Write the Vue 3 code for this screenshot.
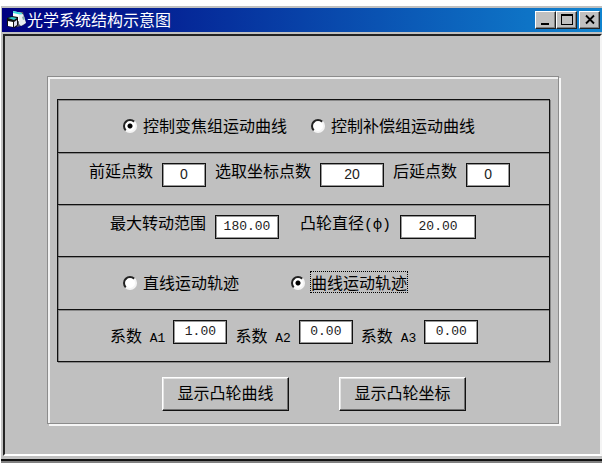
<script setup>
import { ref } from 'vue'

const curve = ref('zoom')
const track = ref('curve')
const points = ref([
  { id: 'front', label: '前延点数', value: '0', size: 'small' },
  { id: 'picked', label: '选取坐标点数', value: '20', size: 'medium' },
  { id: 'back', label: '后延点数', value: '0', size: 'small' },
])
const range = ref('180.00')
const diameter = ref('20.00')
const factors = ref([
  { id: 'A1', value: '1.00' },
  { id: 'A2', value: '0.00' },
  { id: 'A3', value: '0.00' },
])
</script>

<template>
  <main class="window">
    <header class="titlebar">
      <svg class="logo" viewBox="0 0 20 18" aria-hidden="true">
        <path d="M6 1l10 0 1 4 2 6-2 3-7 2z" fill="#556" />
        <path d="M6 0l9 2 0 9-9-2z" fill="#fff" />
        <path d="M6 0l9 2v2L6 2z" fill="#3fdede" />
        <path d="M12 4l4-1 3 9-5 3-2-2z" fill="#e8eef0" />
        <path d="M15 6l2-1 1 3-2 1z" fill="#8aa" />
        <path d="M0 7l5-2 6 1 0 8-3 3-8-2z" fill="#111" />
        <path d="M1 7l4-1 5 1-3 2z" fill="#2cc8c8" />
        <path d="M1 10l5 1v5l-5-1z" fill="#fff" />
        <path d="M7 11l3-2v5l-3 2z" fill="#dde" />
      </svg>
      <h1>光学系统结构示意图</h1>
      <div class="controls">
        <button type="button" aria-label="最小化">
          <svg viewBox="0 0 16 14"><path d="M3 10h8v2H3z" /></svg>
        </button>
        <button type="button" aria-label="最大化">
          <svg viewBox="0 0 16 14"><path d="M2 1h12v11H2zM3 3v8h10V3z" fill-rule="evenodd" /></svg>
        </button>
        <button type="button" aria-label="关闭" class="close">
          <svg viewBox="0 0 16 14"><path d="M4 2.500l8 8M12 2.500l-8 8" fill="none" stroke="#000" stroke-width="1.800" /></svg>
        </button>
      </div>
    </header>

    <form class="client" @submit.prevent>
      <div class="frame">
        <div class="grid">
          <div class="row options">
            <label class="option"><input v-model="curve" type="radio" name="curve" value="zoom"><span>控制变焦组运动曲线</span></label>
            <label class="option"><input v-model="curve" type="radio" name="curve" value="comp"><span>控制补偿组运动曲线</span></label>
          </div>
          <div class="row points">
            <template v-for="p in points" :key="p.id">
              <label :for="p.id">{{ p.label }}</label>
              <input :id="p.id" v-model="p.value" type="text" class="field" :class="p.size">
            </template>
          </div>
          <div class="row sizes">
            <label for="range">最大转动范围</label>
            <input id="range" v-model="range" type="text" class="field medium">
            <label for="diameter" class="second">凸轮直径<span class="latin phi">(ф)</span></label>
            <input id="diameter" v-model="diameter" type="text" class="field large">
          </div>
          <div class="row options">
            <label class="option track"><input v-model="track" type="radio" name="track" value="line"><span>直线运动轨迹</span></label>
            <label class="option"><input v-model="track" type="radio" name="track" value="curve"><span class="focused">曲线运动轨迹</span></label>
          </div>
          <div class="row factors">
            <template v-for="f in factors" :key="f.id">
              <label :for="f.id">系数<span class="latin">&nbsp;{{ f.id }}</span></label>
              <input :id="f.id" v-model="f.value" type="text" class="field factor">
            </template>
          </div>
        </div>
        <div class="actions">
          <button type="button">显示凸轮曲线</button>
          <button type="button">显示凸轮坐标</button>
        </div>
      </div>
    </form>
  </main>
</template>

<style>
body {
  background: #fff;
}
</style>

<style scoped>
* {
  box-sizing: border-box;
}
.window {
  margin: 6px 3px 0 1px;
  padding: 2px 0 5px 1px;
  background: #c0c0c0;
  border-bottom: 2px solid #808080;
  box-shadow: inset 0 -2px #111;
  color: #000;
  font: 16px/20px "Noto Sans CJK SC", sans-serif;
}
.titlebar {
  display: flex;
  align-items: center;
  height: 24px;
  padding: 0 2px 0 5px;
  background: linear-gradient(90deg, #000080, #1084d0);
  color: #fff;
}
.logo {
  width: 20px;
  height: 18px;
  flex: none;
}
h1 {
  flex: 1;
  margin: 0 0 2px;
  font: inherit;
}
.controls {
  display: flex;
}
.controls button {
  display: flex;
  align-items: center;
  justify-content: center;
  width: 21px;
  height: 18px;
  padding: 0;
  background: #c0c0c0;
  border: 1px solid;
  border-color: #fff #222 #222 #fff;
  box-shadow: inset -1px -1px #808080;
}
.controls .close {
  margin-left: 2px;
}
.controls svg {
  width: 16px;
  height: 14px;
}
.client {
  margin: 2px 0 0 1px;
  padding: 40px 41px 30px 42px;
  border: 2px solid;
  border-color: #222 #f4f4f4 #fff #222;
}
.frame {
  padding: 22px 8px 12px 9px;
  border: 1px solid #8c8c8c;
  box-shadow: inset 2px 2px #f0f0f0, 2px 2px #f6f6f6;
}
.grid {
  border: 1px solid #111;
  box-shadow: 1px 1px #888, inset 1px 1px #888;
}
.row {
  display: flex;
  align-items: flex-start;
  gap: 9px;
  height: 52px;
  padding: 10px 0 0 52px;
}
.row + .row {
  border-top: 1px solid #111;
  box-shadow: inset 0 1px #888;
}
.row:nth-child(4) {
  height: 53px;
}
.row.points {
  padding-left: 31px;
}
.row label {
  display: block;
  margin-top: -3px;
  white-space: nowrap;
}
.row .second {
  margin-left: 12px;
}
.latin {
  font-family: "Liberation Mono", monospace;
  font-size: 13px;
}
.latin.phi {
  font-size: 15px;
}
.row.factors label {
  padding-top: 8px;
}
.row.factors {
  gap: 8px;
}
.field {
  height: 24px;
  margin: 0;
  padding: 0 0 2px;
  background: #fff;
  border: 1px solid #111;
  border-radius: 0;
  box-shadow: inset 0 0 0 1px #999;
  color: #222;
  font: 13px/20px "Liberation Mono", monospace;
  text-align: center;
  outline: 0;
}
.points .field {
  font: 14px/20px "Liberation Sans", sans-serif;
}
.small {
  width: 44px;
}
.medium {
  width: 64px;
}
.large {
  width: 76px;
}
.factor {
  width: 54px;
}
.row.options {
  align-items: center;
  gap: 24px;
  padding: 0 0 0 65px;
}
.row .option {
  display: flex;
  align-items: center;
  gap: 6px;
  margin-top: 0;
}
.row .track {
  margin-right: 28px;
}
.option span {
  margin-bottom: 2px;
}
.option input {
  appearance: none;
  width: 14px;
  height: 14px;
  margin: 0;
  border: 2px solid;
  border-color: #222 #f4f4f4 #f4f4f4 #222;
  border-radius: 50%;
  background: #fff;
}
.option input:checked {
  background: radial-gradient(circle, #000 0 2px, #fff 3px);
}
.option .focused {
  outline: 1px dotted #000;
}
.actions {
  display: flex;
  gap: 50px;
  padding: 15px 0 0 105px;
}
.actions button {
  width: 127px;
  height: 34px;
  padding: 0 0 4px;
  background: #c0c0c0;
  border: 1px solid;
  border-color: #fff #111 #111 #fff;
  box-shadow: inset -1px -1px #707070, inset 1px 1px #e4e4e4;
  color: #000;
  font: inherit;
  white-space: nowrap;
}
</style>
